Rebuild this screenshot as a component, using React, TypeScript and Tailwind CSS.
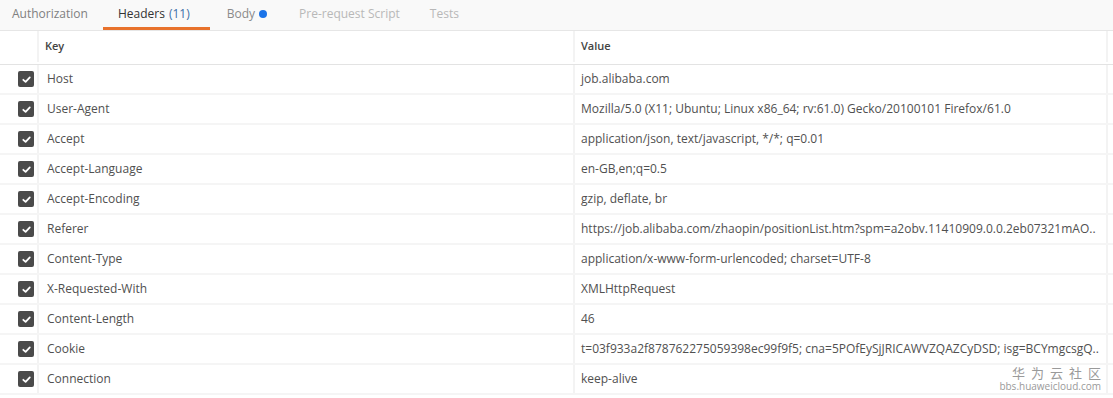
import React from "react";

const rows: [string, string][] = [
  ["Host", "job.alibaba.com"],
  ["User-Agent", "Mozilla/5.0 (X11; Ubuntu; Linux x86_64; rv:61.0) Gecko/20100101 Firefox/61.0"],
  ["Accept", "application/json, text/javascript, */*; q=0.01"],
  ["Accept-Language", "en-GB,en;q=0.5"],
  ["Accept-Encoding", "gzip, deflate, br"],
  ["Referer", "https://job.alibaba.com/zhaopin/positionList.htm?spm=a2obv.11410909.0.0.2eb07321mAO.."],
  ["Content-Type", "application/x-www-form-urlencoded; charset=UTF-8"],
  ["X-Requested-With", "XMLHttpRequest"],
  ["Content-Length", "46"],
  ["Cookie", "t=03f933a2f878762275059398ec99f9f5; cna=5POfEySjJRICAWVZQAZCyDSD; isg=BCYmgcsgQ.."],
  ["Connection", "keep-alive"],
];

function Check() {
  return (
    <div className="w-[16px] h-[16px] rounded-[2px] bg-[#4a4a4a] flex items-center justify-center">
      <svg width="11" height="11" viewBox="0 0 12 12">
        <path d="M2.5 6.3 L5 8.6 L9.6 3.6" fill="none" stroke="#fff" strokeWidth="1.9" strokeLinecap="round" strokeLinejoin="round" />
      </svg>
    </div>
  );
}

export default function App() {
  return (
    <div className="relative w-[1113px] h-[398px] overflow-hidden bg-white text-[#505050]" style={{ fontFamily: '"Open Sans", "Noto Sans", sans-serif' }}>
      <div className="h-[31px] bg-[#f9f9f9] border-b border-[#e6e6e6] flex items-stretch text-[12px]">
        <div className="pl-[12px] pr-[15px] pb-[3px] flex items-center text-[#808080]">Authorization</div>
        <div className="relative pl-[15px] pr-[20px] pb-[3px] flex items-center text-[#333]">
          <span>Headers</span>
          <span className="ml-[4px] text-[#3b6fa8]">(11)</span>
          <div className="absolute left-0 right-0 bottom-0 h-[3px] bg-[#e8722c]" />
        </div>
        <div className="pl-[17px] pr-[32px] pb-[3px] flex items-center text-[#8a8a8a]">
          <span>Body</span>
          <span className="ml-[4px] w-[8px] h-[8px] rounded-full bg-[#1a73e8]" />
        </div>
        <div className="pr-[30px] pb-[3px] flex items-center text-[#b8b8b8]">Pre-request Script</div>
        <div className="pb-[3px] flex items-center text-[#b8b8b8]">Tests</div>
      </div>
      <div className="flex h-[34px] pb-[2px] border-b border-[#e3e3e3] text-[11px] font-semibold text-[#444]">
        <div className="w-[39px] border-r-2 border-[#f3f3f3]" />
        <div className="w-[536px] pl-[6px] flex items-center border-r-2 border-[#f3f3f3]">Key</div>
        <div className="w-[533px] pl-[6px] flex items-center border-r-2 border-[#f3f3f3]">Value</div>
        <div className="flex-1" />
      </div>
      {rows.map(([k, v]) => (
        <div key={k} className="flex h-[30px] border-b-2 border-[#f5f5f5] text-[12px] text-[#505050]">
          <div className="w-[39px] flex items-center justify-end pr-[3px] border-r-2 border-[#f3f3f3]">
            <Check />
          </div>
          <div className="w-[536px] pl-[8px] flex items-center border-r-2 border-[#f3f3f3]">{k}</div>
          <div className="w-[533px] pl-[6px] flex items-center border-r-2 border-[#f3f3f3] whitespace-nowrap overflow-hidden">{v}</div>
          <div className="flex-1" />
        </div>
      ))}
      <div className="absolute right-[12px] bottom-[6px] flex flex-col items-end text-[#9a9a9a]">
        <div className="text-[13px] leading-[15px] tracking-[6px] mr-[-6px]" style={{ fontFamily: '"Noto Sans CJK SC", sans-serif' }}>华为云社区</div>
        <div className="text-[10px] leading-[12px]">bbs.huaweicloud.com</div>
      </div>
    </div>
  );
}
